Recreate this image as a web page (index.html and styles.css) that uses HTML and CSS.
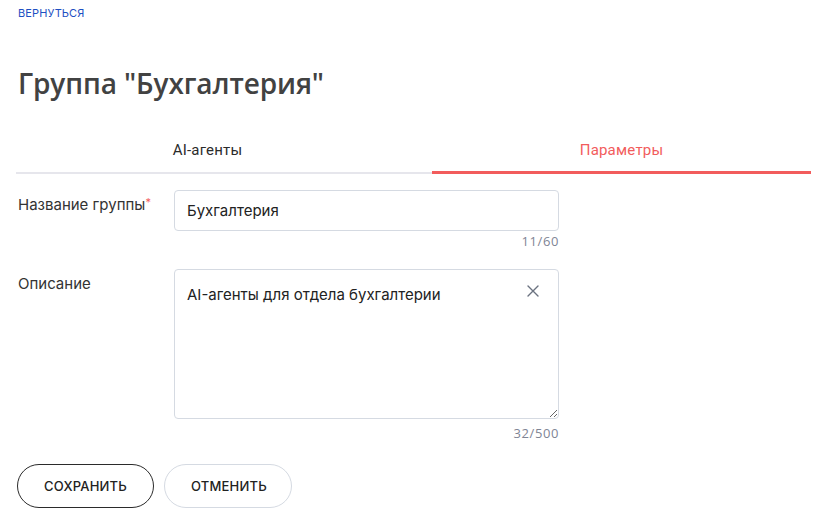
FILE: index.html
```html
<!DOCTYPE html>
<html lang="ru">
<head>
    <meta charset="UTF-8">
    <meta name="viewport" content="width=device-width, initial-scale=1.0">
    <title>Группа "Бухгалтерия"</title>
    <link rel="stylesheet" href="styles.css">
</head>
<body>

    <div class="page">
        <a class="back-link" href="#">Вернуться</a>

        <h1 class="page-title">Группа "Бухгалтерия"</h1>

        <div class="tabs">
            <div class="tab">AI-агенты</div>
            <div class="tab active">Параметры</div>
        </div>

        <div class="form">
            <div class="form-row">
                <label class="form-label" for="name">Название группы<span class="required">*</span></label>
                <div class="form-field">
                    <input type="text" id="name" class="text-input" value="Бухгалтерия">
                    <div class="counter">11/60</div>
                </div>
            </div>

            <div class="form-row">
                <label class="form-label" for="description">Описание</label>
                <div class="form-field">
                    <div class="textarea-wrap">
                        <textarea id="description" class="text-area">AI-агенты для отдела бухгалтерии</textarea>
                        <button class="clear-btn" type="button" aria-label="Очистить">
                            <svg width="12" height="12" viewBox="0 0 12 12"><path d="M1 1L11 11M11 1L1 11" stroke="#6b7280" stroke-width="1.4" stroke-linecap="round"/></svg>
                        </button>
                    </div>
                    <div class="counter counter-area">32/500</div>
                </div>
            </div>
        </div>

        <div class="actions">
            <button class="btn btn-primary" type="button">Сохранить</button>
            <button class="btn btn-secondary" type="button">Отменить</button>
        </div>
    </div>

</body>
</html>
```

FILE: styles.css
```css
* {
    box-sizing: border-box;
}
body {
    margin: 0;
    font-family: Inter, "Noto Sans", sans-serif;
    color: #2b2b2b;
    background: #fff;
}
.page {
    padding: 7px 10px 0 16px;
}
.back-link {
    display: block;
    margin-left: 2px;
    font-size: 11px;
    line-height: 12px;
    text-transform: uppercase;
    color: #1d4fc2;
    text-decoration: none;
    letter-spacing: 0.1px;
}
.page-title {
    margin: 46px 0 0 2px;
    font-family: "Open Sans", sans-serif;
    font-size: 28px;
    font-weight: 600;
    line-height: 36px;
    color: #424242;
    letter-spacing: -0.1px;
}
.tabs {
    display: flex;
    margin-top: 28px;
    border-bottom: 2px solid #e6e6ec;
}
.tab {
    flex: 0 0 383px;
    text-align: center;
    font-family: Roboto, sans-serif;
    font-size: 15px;
    line-height: 20px;
    padding: 11px 0 11px;
    color: #2b2b2b;
    letter-spacing: 0.2px;
}
.tab.active {
    flex: 1;
    margin-left: 33px;
    color: #f25c5c;
    border-bottom: 3px solid #f25c5c;
    margin-bottom: -2px;
}
.form {
    display: flex;
    flex-direction: column;
    gap: 20px;
    margin-top: 16px;
}
.form-row {
    display: flex;
}
.form-label {
    flex: 0 0 158px;
    padding: 5px 0 0 2px;
    font-size: 15px;
    color: #333;
}
.required {
    color: #f25c5c;
    font-size: 11px;
    vertical-align: top;
}
.form-field {
    width: 385px;
}
.text-input {
    display: block;
    width: 100%;
    height: 41px;
    padding: 0 12px;
    border: 1px solid #d5dae2;
    border-radius: 4px;
    font-family: Inter, sans-serif;
    font-size: 15px;
    color: #222;
}
.textarea-wrap {
    position: relative;
}
.text-area {
    display: block;
    width: 100%;
    height: 150px;
    padding: 15px 40px 10px 12px;
    border: 1px solid #d5dae2;
    border-radius: 4px;
    font-family: Inter, sans-serif;
    font-size: 15px;
    line-height: 20px;
    color: #222;
    resize: vertical;
}
.clear-btn {
    position: absolute;
    top: 16px;
    right: 20px;
    padding: 0;
    border: none;
    background: none;
    cursor: pointer;
}
.counter {
    text-align: right;
    font-family: "Open Sans", sans-serif;
    font-size: 13px;
    line-height: 16px;
    margin-top: 2px;
    color: #7f8595;
    letter-spacing: 0.6px;
}
.counter-area {
    margin-top: 6px;
}
.actions {
    display: flex;
    gap: 10px;
    margin-top: 23px;
    margin-left: 1px;
}
.btn {
    height: 44px;
    padding: 0 26px;
    border-radius: 22px;
    background: #fff;
    font-family: Inter, sans-serif;
    font-size: 13px;
    font-weight: 500;
    text-transform: uppercase;
    color: #222;
    cursor: pointer;
    letter-spacing: 0.2px;
}
.btn-primary {
    width: 137px;
    border: 1px solid #2b2b2b;
}
.btn-secondary {
    width: 128px;
    border: 1px solid #d5dae2;
}
```
